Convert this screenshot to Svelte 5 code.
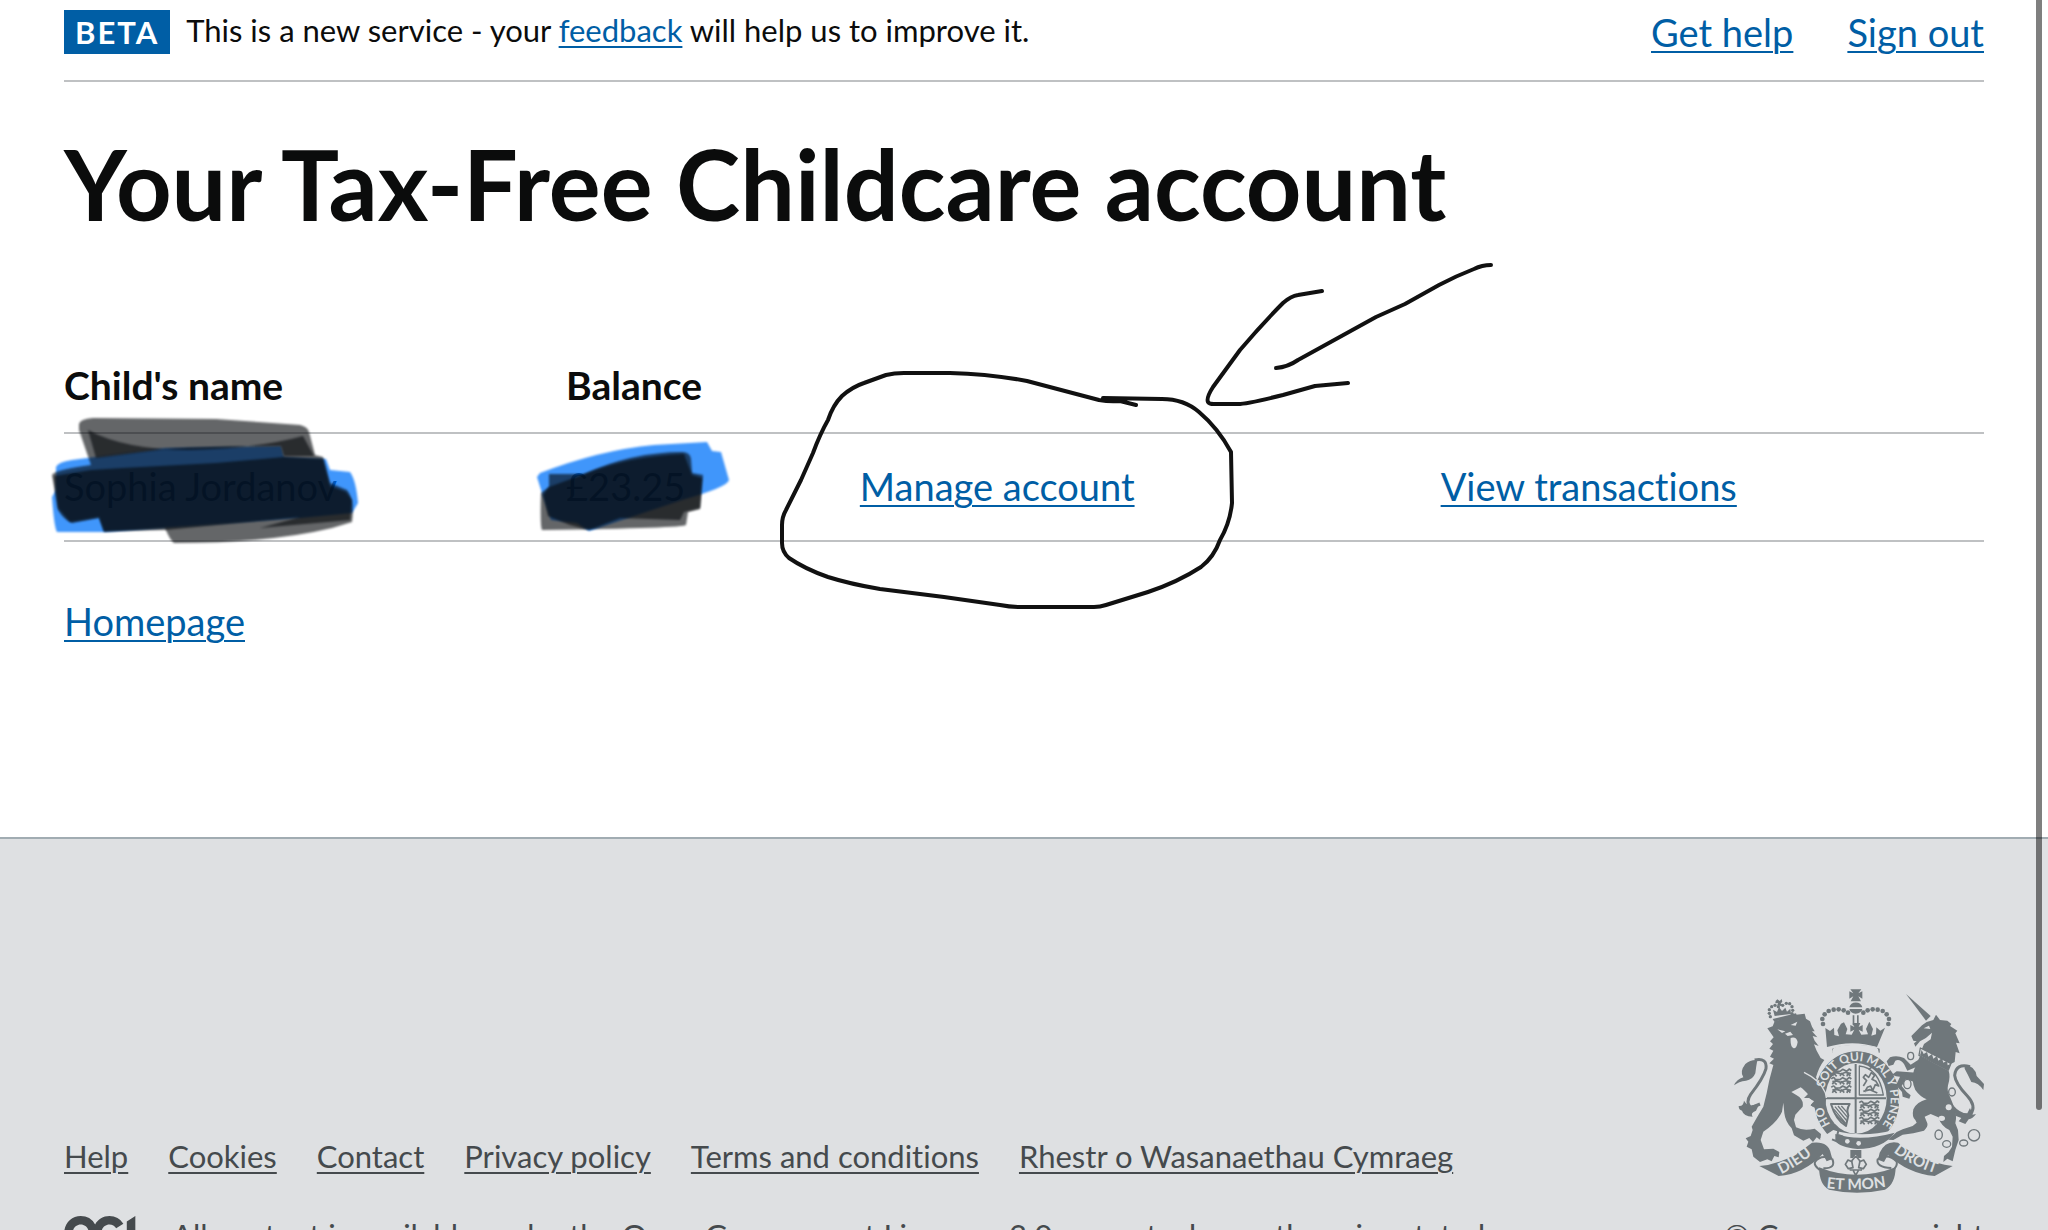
<script>
  const accounts = [{ name: 'Sophia Jordanov', balance: '£23.25' }];

  const footerLinks = [
    'Help',
    'Cookies',
    'Contact',
    'Privacy policy',
    'Terms and conditions',
    'Rhestr o Wasanaethau Cymraeg'
  ];

  // beads on the arches of the big crown
  const beads = [
    [309, 132], [307, 117], [314, 103], [326, 93], [341, 89], [356, 88], [371, 91], [384, 98],
    [430, 98], [443, 91], [458, 88], [473, 89], [488, 93], [500, 103], [507, 117], [505, 132]
  ];

  const smallBeads = [
    [151, 110], [148, 100], [148, 89], [155, 80], [165, 76], [175, 80],
    [188, 76], [199, 70], [209, 71], [216, 80], [218, 91], [216, 101]
  ];

  // heraldic lions in the quarters of the shield
  const lions = [
    [334, 272], [334, 297], [334, 322], [418, 368], [418, 392], [418, 416]
  ];

  const chain = [
    [572, 228, 9, 11], [562, 312, 11, 14], [696, 336, 10, 12], [656, 464, 11, 14],
    [680, 492, 12, 10], [731, 489, 12, 9], [762, 466, 17, 17]
  ];
</script>

<div class="page">
  <div class="wrap">
    <header class="banner">
      <strong class="tag">BETA</strong>
      <p>This is a new service - your <a href="#feedback">feedback</a> will help us to improve it.</p>
      <nav>
        <a href="#help">Get help</a>
        <a href="#signout">Sign out</a>
      </nav>
    </header>

    <main>
      <h1>Your Tax-Free Childcare account</h1>

      <table>
        <thead>
          <tr>
            <th class="name">Child's name</th>
            <th class="balance">Balance</th>
            <th class="manage"></th>
            <th></th>
          </tr>
        </thead>
        <tbody>
          {#each accounts as account}
            <tr>
              <td>{account.name}</td>
              <td>{account.balance}</td>
              <td><a href="#manage">Manage account</a></td>
              <td><a href="#transactions">View transactions</a></td>
            </tr>
          {/each}
        </tbody>
      </table>

      <a class="home" href="#home">Homepage</a>
    </main>
  </div>

  <footer>
    <div class="wrap footer-row">
      <div class="meta">
        <ul>
          {#each footerLinks as link}
            <li><a href="#footer">{link}</a></li>
          {/each}
        </ul>
        <div class="licence">
          <svg class="ogl" viewBox="0 0 483.2 195.7" aria-hidden="true">
            <path fill="currentColor" d="M421.5 142.8V.1l-50.7 32.3v161.1h112.4v-50.7zm-122.3-9.6A47.12 47.12 0 0 1 221 97.8c0-26 21.1-47.1 47.1-47.1 16.7 0 31.4 8.7 39.7 21.8l42.7-27.2A97.63 97.63 0 0 0 268.1 0c-36.5 0-68.3 20.1-85.1 49.7A98 98 0 0 0 97.8 0C43.9 0 0 43.9 0 97.8s43.9 97.8 97.8 97.8c36.5 0 68.3-20.1 85.1-49.7a97.76 97.76 0 0 0 149.6 25.4l19.4 22.2h3v-87.8h-80l24.3 27.5zM97.8 145c-26 0-47.1-21.1-47.1-47.1s21.1-47.1 47.1-47.1 47.1 21.1 47.1 47.1S123.8 145 97.8 145" />
          </svg>
          <p>All content is available under the <a href="#ogl">Open Government Licence v3.0</a>, except where otherwise stated</p>
        </div>
      </div>

      <div class="copyright">
        <svg class="crest" viewBox="42 24 750 618" aria-hidden="true">
          <defs>
            <path id="garter" d="M331 432A102 116 0 1 1 478 445" />
            <path id="ribbon-left" d="M184 582Q232 560 290 514" />
            <path id="ribbon-right" d="M520 516Q570 556 650 581" />
            <path id="ribbon-mid" d="M319 624Q408 636 498 620" />
          </defs>

          <!-- crown -->
          <g class="ink">
            <path d="M391 28h33l-9 12 12-6v22l-12-7 8 15h-31l8-15-12 7V34l12 6z" />
            <path d="M388 82a20 19 0 0 1 39 0z M388 87h39q-3 13-20 14q-16-1-19-14z" />
            <path d="M398 106h5v30h-5zM411 106h5v30h-5z" />
            <path d="M316 144l14 9 12-10 1 22 14 4-5-18 11-20 9-4 10 20-5 16 18 1 8-15-12 6v-20l12 6-5-12h23l-5 12 12-6v20l-12-6 8 15 20-1-6-16 10-22 11 22-5 20 14-4 1-21 12 10 14-9-24 58q-74-23-150 0z" />
            <path d="M337 206q70-22 142 0v12q-71-20-142 1z" />
            {#each beads as [x, y]}
              <circle cx={x} cy={y} r="7" />
            {/each}
          </g>

          <!-- lion -->
          <g class="ink">
            <path d="M163 125l-5-8 70-17 3 8zM172 58l7 5 6-6 2 9-5 4 7 6-8 2-9-3 2-6-8 1 1-7zM164 108l-5-19 12 7 6-15 9 12 10-10 5 12 10-9 2 16z" />
            {#each smallBeads as [x, y]}
              <circle cx={x} cy={y} r="5" />
            {/each}
            <path d="M142 145L158 139 164 124 228 104 254 101 258 116 270 124 276 140 284 154 276 154 292 172 278 168 284 182 296 198 282 193 290 212 302 234 313 240Q296 262 288 292L300 308Q318 332 318 352L315 380 304 386 296 374 284 383 272 376 282 364 268 354 252 354 264 342 248 326 242 322 214 336 230 346Q252 358 248 380L226 404 222 420 228 442Q250 454 284 446L303 462 301 480 290 472 279 486 268 474 250 482 222 466 215 445Q196 426 193 400L190 368 186 395Q172 426 130 455L122 480 132 508 160 506 178 516 176 532 163 528 155 544 142 538 120 546 100 530 95 508 80 500 85 485 77 475 92 468 98 450 95 440 112 410 130 380 140 340 148 300 160 255 148 250 162 236 150 230 160 212 148 206 159 192 150 184 161 172 150 156z" />
            <path d="M42 316Q50 298 70 292 58 275 76 252 92 238 112 240 108 262 106 280 98 300 78 302 56 304 42 316z" />
            <path d="M56 378Q70 380 72 362 82 378 96 376L118 372 108 392Q90 398 98 410 70 408 66 392 56 390 56 378z" />
          </g>
          <path class="ink-line tail" d="M104 240Q142 232 138 266 130 295 92 343 76 366 92 384L120 372" />
          <path class="paper" d="M212 174q17-5 21 12-3 20-12 19-11-5-9-31zM172 148l24 6-10 5zM212 135l20-10-5 12zM195 161l16-6 8 10-16 3z" />

          <!-- garter and shield -->
          <ellipse class="garter" cx="410" cy="358" rx="130" ry="146" />
          <path class="paper" d="M338 224q-6-20 12-24 56-11 115 0 14 4 10 24-66-24-137 0z" />
          <ellipse class="paper" cx="408" cy="355" rx="92" ry="106" />
          <path class="ink-line" d="M407 252v207M318 355h180" />
          <path class="ink-line thin" d="M418 258q58 6 72 87h-72z" />
          {#each lions as [x, y]}
            <path class="ink-line lion" d="M{x} {y}q8-9 12 2l14 0 8-6 12 6 8-7 6 5M{x + 3} {y + 8}l12-2 14 4 14-5 16 4M{x + 3} {y + 16}l5-7 8 8M{x + 26} {y + 16}l5-8 8 8M{x + 47} {y + 17}l2-9 8 8" />
          {/each}
          <path class="ink-line lion" d="M430 318l10-16-10-10 6-8 10 8 8-14 10 8-8 12 12 6 8 14-10-4-8 18-6-14-10 4-8 14M430 334l20-5 22 10M446 268l12-8" />
          <path class="ink-line" d="M333 372h56q-11 18-4 34l-7 32q-30-17-45-66z" />
          <path class="ink-line thin" d="M345 380l36 43M354 378l29 34M364 378l20 22M342 388l36 43M344 400l34 35" />
          <path class="paper" d="M300 476l40-26q84 26 180 0l30 10-20 60H330z" />
          <path class="ink" d="M346 462q74 24 178-4-34 48-112 49-54-6-66-25z" />
          <path class="ink-line" d="M338 440l17 12-3 12 16 5-12 17-20-8" />
          <circle class="paper" cx="382" cy="484" r="7" />
          <circle class="paper" cx="416" cy="490" r="7" />
          <!-- forepaw holding the garter -->
          <path class="ink" d="M250 280L288 300Q318 326 319 352L315 380 304 386 296 374 284 383 272 376 282 364 268 354 260 330z" />
          <path class="paper-line" d="M252 277Q300 300 316 338L319 354" />
          <text class="garter-text"><textPath href="#garter">HO</textPath></text>
          <text class="garter-text"><textPath href="#garter" startOffset="112">SOIT QUI MAL Y PENSE</textPath></text>

          <!-- unicorn -->
          <g class="ink">
            <path d="M558 42L632 108 618 122z" />
            <path d="M574 168L606 136 620 126 640 120 648 104 660 120 682 122 694 132 690 138 712 152 706 160 719 190 708 188 719 220 707 216 704 246 692 252 606 206 612 192 632 178 636 158Q618 176 600 184L586 200 582 190 590 184 580 182z" />
            <path d="M600 228L686 272Q692 290 684 316 680 335 690 350L702 380Q712 400 706 430L714 450 716 480 706 510 698 544 682 536 670 546 672 528 686 516 696 500 698 470 688 450Q664 440 655 412L632 402 614 410 622 430Q625 440 612 452L580 460 548 464 520 480 504 479 530 456 548 448 578 438 590 428 586 420Q575 412 580 388 590 366 620 358 600 350 586 330 572 300 582 270z" />
            <path d="M596 258L562 272 552 252Q540 236 526 242L520 254 506 258 500 244 510 232Q530 224 552 234L572 254 600 236z" />
            <path d="M590 278L530 274 516 284Q528 290 540 290L528 316 546 336 548 350 568 356 572 346 560 336 545 318 558 298 590 308z" />
            <path d="M734 254Q766 258 770 288L792 312 790 330Q775 308 754 306 744 284 734 266z" />
            <path d="M698 374Q720 400 742 400L750 384 758 404 768 402Q758 416 746 418L736 432Q724 428 716 424L724 414 708 408z" />
          </g>
          <path class="ink-line tail" d="M750 260Q708 248 704 286 706 310 742 348 770 378 752 402" />
          <path class="paper" d="M611 145l16-8 4 10z" />
          <path class="ink-line thin" d="M601 204l92 46-8 20-88-44z" />
          <path class="ink" d="M600 226l5-16 6 12 10-6 4 14 11-8 4 14 11-8 4 14 11-8 4 14 11-6 2 14 8-4-6 20z" />
          <circle class="paper" cx="686" cy="382" r="9" />
          <ellipse class="paper" cx="665" cy="415" rx="10" ry="8" />
          {#each chain as [x, y, rx, ry]}
            <ellipse class="link" cx={x} cy={y} {rx} {ry} />
          {/each}

          <!-- motto ribbon -->
          <g class="ink">
            <path d="M118 558q76-4 158-70 49-6 56 31l5 18-17 7-12-22q-56 60-132 66z" />
            <path d="M297 562q111 45 230 0-1 51-32 67-84 18-168 0-29-14-30-67z" />
            <path d="M698 558q-98-15-164-70-37-8-55 30l-5 21 18 7 12-22q58 56 140 64z" />
          </g>
          <path class="ink-line" d="M337 537q-34-15-52 9-4 10 14 24M337 537q12 29-27 28M473 537q33-19 57 8 3 12-10 24M473 537q-6 25 41 27" />
          <text class="motto"><textPath href="#ribbon-left">DIEU</textPath></text>
          <text class="motto"><textPath href="#ribbon-mid">ET MON</textPath></text>
          <text class="motto"><textPath href="#ribbon-right">DROIT</textPath></text>
          <path class="ink" d="M391 510h33v24h-33z" />
          <path class="paper" d="M407 524l16 20 16 4-8 24-16 2-8 12-8-12-16-2-8-24 16-4z" />
          <path class="ink-line fleur" d="M407 528l-12 15 4 20-14 3-9-13 8-13 14 6M407 528l13 15-4 20 14 3 9-13-8-13-14 6M389 570h37M400 572l7 14 8-14" />
        </svg>
        <a href="#copyright">© Crown copyright</a>
      </div>
    </div>
  </footer>

  <!-- pen and marker strokes over the page -->
  <svg class="markup" aria-hidden="true">
    <g class="marker">
      <path class="blue" d="M56 467Q58 462 72 460L165 448 281 446 284 457 326 459 330 470 350 472Q356 480 358 503L352 513 300 518 105 532 57 532Q54 527 52 497L56 490z" />
      <path class="black" d="M79 424Q80 419 93 418L216 419 300 425Q308 427 309 432L315 455 323 457 330 483 347 490Q355 500 352 522L332 528Q270 543 174 543 170 540 165 528L104 532 99 518 72 523Q64 520 58 510L52 475Q54 470 91 465L79 430z" />
      <path class="black" d="M88 430Q125 450 190 450 260 448 303 436L314 456 284 456 281 446Q220 446 165 449L96 458z" />
      <path class="black" d="M54 476L91 470 123 468 216 463 284 457 323 459 330 486 346 492 352 500 350 520 260 528 300 517 165 530 104 531 99 517 70 522 58 508z" />
      <path class="blue" d="M537 477L540 473Q600 450 654 445L707 442 712 451 721 452 729 480Q728 487 682 500L589 531 577 523 551 520 542 493z" />
      <path class="black" d="M549 474L584 474Q632 452 682 452 690 452 691 459L692 473 703 475 700 509 688 512 686 525Q684 528 542 530 540 527 541 493L549 487z" />
      <path class="black" d="M549 487L590 472Q632 456 684 454L692 475 702 478 700 508 684 512 680 520 620 518 589 530 570 525 548 516 543 495z" />
    </g>
    <g class="pen">
      <path d="M1103 398L1162 399Q1184 399 1199 412 1218 428 1231 452L1232 503Q1230 523 1220 540 1214 557 1201 567 1178 582 1148 592L1106 605Q1100 607 1094 607L1020 607Q1010 607 1000 605L944 597 880 589Q850 584 828 577 805 569 789 558 782 552 782 543L782 525Q782 517 786 510L801 480 813 453Q820 434 828 420 833 405 842 396 852 387 864 383L886 375Q894 373 904 373L950 373Q990 374 1027 381L1099 400Q1110 402 1120 401L1136 405" />
      <path d="M1491 265Q1482 265 1474 269 1456 276 1439 285L1405 304 1376 317 1298 360Q1288 367 1276 368" />
      <path d="M1322 291L1298 295Q1291 296 1283 303 1262 324 1240 350L1213 387Q1206 398 1208 402 1209 404 1214 404L1238 404Q1247 404 1283 395L1315 386 1348 383" />
    </g>
  </svg>

  <div class="scrollbar"></div>
</div>

<style>
  :global(body) {
    margin: 0;
    background: #fff;
  }

  .page {
    position: relative;
    height: 100vh;
    overflow: hidden;
    font-family: Lato, "Noto Sans", sans-serif;
    font-size: 38px;
    font-variant-ligatures: none;
    line-height: 48px;
    color: #0b0c0c;
  }

  .wrap {
    padding: 0 64px;
  }

  p, h1, ul {
    margin: 0;
    padding: 0;
  }

  a {
    color: #005ea5;
    text-decoration: underline;
    text-decoration-thickness: 2px;
    text-underline-offset: 4px;
  }

  .banner {
    display: flex;
    align-items: flex-start;
    padding: 10px 0 26px;
    border-bottom: 2px solid #bfc1c3;
    font-size: 31px;
    line-height: 40px;
  }

  .tag {
    padding: 0 11px;
    margin-right: 16px;
    background: #005ea5;
    color: #fff;
    font-weight: 700;
    letter-spacing: 2px;
    line-height: 44px;
  }

  nav {
    display: flex;
    gap: 54px;
    margin-left: auto;
    font-size: 38px;
    line-height: 44px;
  }

  h1 {
    margin-top: 52px;
    font-size: 97px;
    line-height: 100px;
    font-weight: 700;
  }

  table {
    width: 100%;
    margin: 127px 0 55px;
    border-collapse: separate;
    border-spacing: 0;
    table-layout: fixed;
  }

  th, td {
    padding: 0;
    text-align: left;
    border-bottom: 2px solid #bfc1c3;
  }

  th {
    padding-bottom: 23px;
    height: 48px;
    font-size: 39px;
  }

  td {
    padding: 28px 0 30px;
  }

  .name {
    width: 26.15%;
  }

  .balance {
    width: 15.3%;
  }

  .manage {
    width: 30.25%;
  }

  .home {
    display: inline-block;
  }

  main {
    padding-bottom: 192px;
  }

  footer {
    padding: 149px 0 60px;
    background: #dee0e2;
    border-top: 2px solid #a1acb2;
    font-size: 31px;
    line-height: 40px;
    color: #454a4d;
  }

  footer a {
    color: #454a4d;
  }

  .footer-row {
    display: flex;
    align-items: flex-end;
    justify-content: space-between;
  }

  ul {
    display: flex;
    gap: 40px;
    margin-bottom: 39px;
    list-style: none;
  }

  .licence {
    display: flex;
    gap: 26px;
  }

  .licence a, .copyright a {
    text-decoration: none;
  }

  .ogl {
    width: 82px;
    height: 33px;
    margin-top: 1px;
  }

  .copyright {
    display: flex;
    flex-direction: column;
    align-items: flex-end;
    gap: 21px;
  }

  .crest {
    width: 250px;
    height: 206px;
  }

  .ink {
    fill: #6f777b;
  }

  .paper {
    fill: #dee0e2;
  }

  .garter {
    fill: #6f777b;
    stroke: #dee0e2;
    stroke-width: 4;
  }

  .ink-line, .paper-line, .link {
    fill: none;
    stroke: #6f777b;
    stroke-width: 6;
    stroke-linejoin: round;
  }

  .paper-line {
    stroke: #dee0e2;
    stroke-width: 4;
  }

  .thin {
    stroke-width: 4;
  }

  .lion, .fleur {
    stroke-width: 5;
  }

  .tail {
    stroke-width: 9;
  }

  .link {
    fill: #dee0e2;
    stroke-width: 4;
  }

  .garter-text, .motto {
    fill: #dee0e2;
    font-weight: 700;
    font-size: 36px;
  }

  .motto {
    font-size: 46px;
  }

  .markup {
    position: absolute;
    top: 0;
    left: 0;
    width: 100%;
    height: 100%;
    pointer-events: none;
  }

  .marker path {
    filter: blur(1px);
  }

  .blue {
    fill: rgba(0, 115, 250, 0.75);
  }

  .black {
    fill: rgba(5, 8, 12, 0.62);
  }

  .pen path {
    fill: none;
    stroke: #111;
    stroke-width: 4;
    stroke-linecap: round;
    stroke-linejoin: round;
  }

  .scrollbar {
    position: absolute;
    top: -10px;
    right: 6px;
    width: 6px;
    height: 1120px;
    border-radius: 3px;
    background: rgba(0, 0, 0, 0.5);
  }
</style>
